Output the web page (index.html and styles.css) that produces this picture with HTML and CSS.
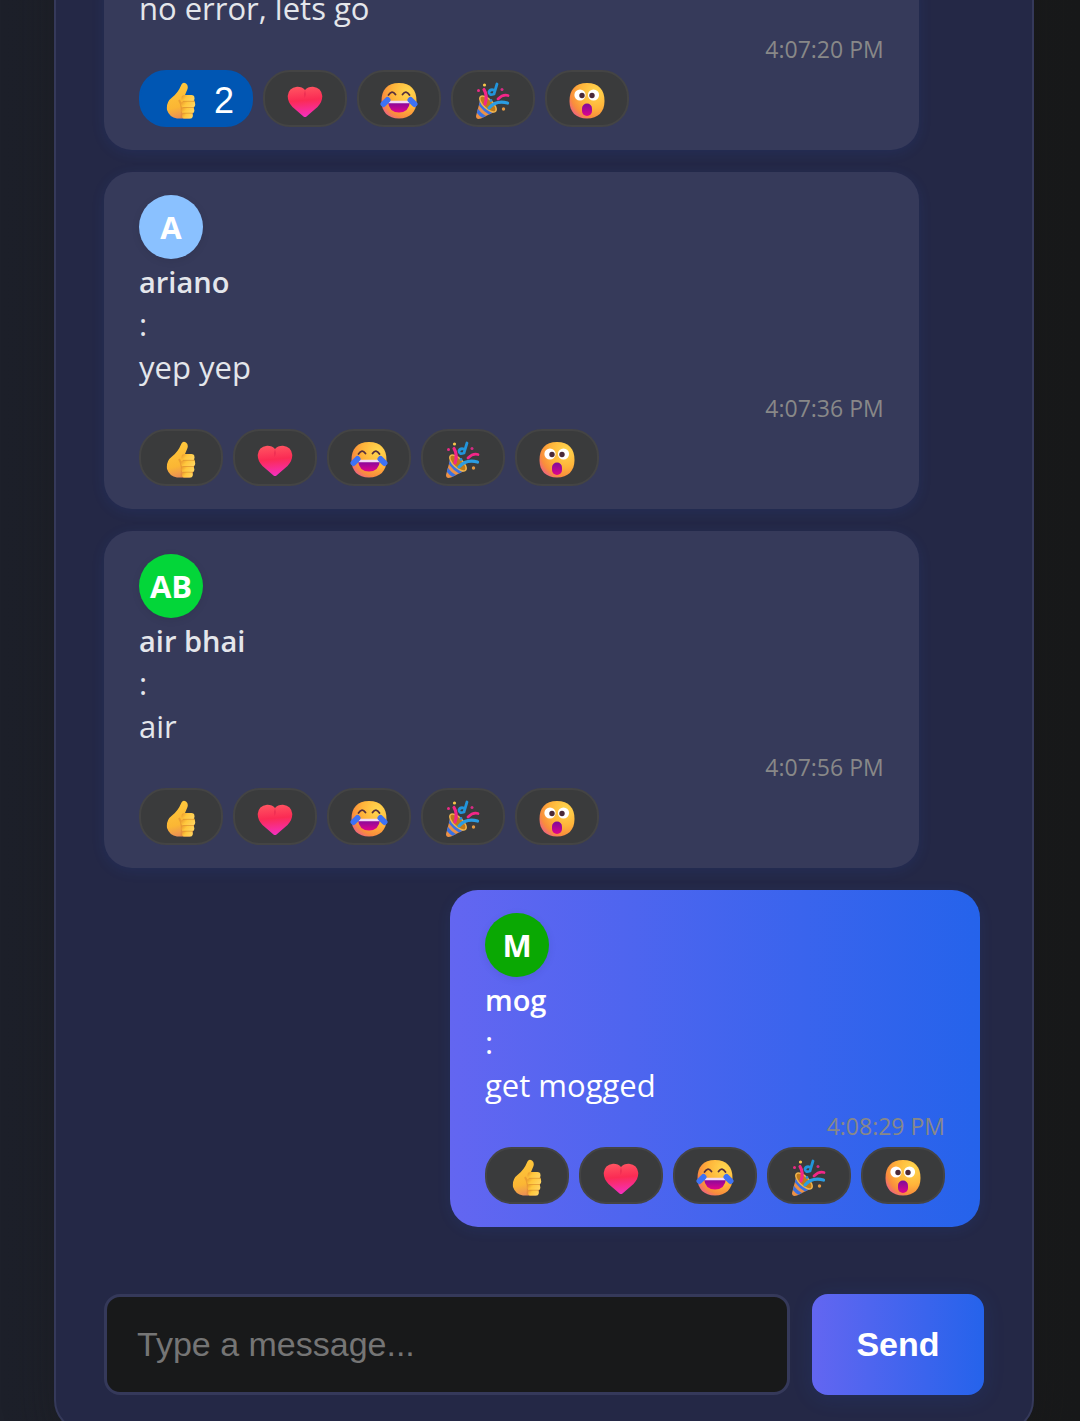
FILE: index.html
```html
<!DOCTYPE html>
<html lang="en">
<head>
<meta charset="utf-8">
<meta name="viewport" content="width=device-width, initial-scale=1">
<title>Chat</title>
<link rel="stylesheet" href="styles.css">
</head>
<body>
<svg class="sprite" aria-hidden="true">
  <defs>
    <radialGradient id="gold" cx="0.75" cy="0.25" r="0.9">
      <stop offset="0" stop-color="#ffd84f"/><stop offset="0.5" stop-color="#ffb43a"/><stop offset="0.8" stop-color="#f98d3c"/><stop offset="1" stop-color="#ee5f86"/>
    </radialGradient>
    <linearGradient id="thumb" x1="0.4" y1="0" x2="0.6" y2="1">
      <stop offset="0" stop-color="#ffc83c"/><stop offset="0.65" stop-color="#fbb634"/><stop offset="1" stop-color="#e88a58"/>
    </linearGradient>
    <linearGradient id="finger" x1="0" y1="0" x2="1" y2="0.4">
      <stop offset="0" stop-color="#e8942c"/><stop offset="0.45" stop-color="#ffc73c"/><stop offset="1" stop-color="#ffd35c"/>
    </linearGradient>
    <linearGradient id="heart" x1="0.4" y1="0" x2="0.5" y2="1">
      <stop offset="0" stop-color="#ff5461"/><stop offset="0.45" stop-color="#fb2b54"/><stop offset="1" stop-color="#f52fc0"/>
    </linearGradient>
    <linearGradient id="mouth" x1="0" y1="0" x2="0" y2="1">
      <stop offset="0" stop-color="#7d0a9c"/><stop offset="1" stop-color="#e0048c"/>
    </linearGradient>
    <clipPath id="cone"><path d="M7 15Q12 27 22 29L7 36.500Q2 38 2 34Z"/></clipPath>
  </defs>
  <symbol id="i-thumb" viewBox="0 0 38 38">
    <path d="M19.500 2.500Q21-.300 24 1.500Q26.500 3 25.500 7L22.800 13.500H28Q32.500 14 32 18Q34 21 31.500 24Q33 27.500 30.500 30Q31.500 35.500 27.500 36.500H15Q7.500 35.500 5 28Q4 20 10 15.500Q16 11 19.500 2.500Z" fill="url(#thumb)"/>
    <path d="M17 18Q21 24 19.500 36" fill="none" stroke="#dc8630" stroke-width="2" opacity=".55"/>
    <g fill="url(#finger)"><rect x="19.500" y="13" width="13" height="6.500" rx="3.200"/><rect x="19" y="19.300" width="14.200" height="6.300" rx="3.100"/><rect x="19.500" y="25.400" width="12.800" height="6" rx="3"/><rect x="20" y="31" width="10.800" height="5.600" rx="2.800"/></g>
    <path d="M21 19.300H32M20.500 25.500H32M21 31.200H31" stroke="#d78a2c" stroke-width=".8" opacity=".7"/>
  </symbol>
  <symbol id="i-heart" viewBox="0 0 38 38">
    <path d="M19 8Q22 4.500 27 4.700Q35.500 5.500 36.300 14Q36.300 20 31.500 25L20.500 34.500Q19 35.500 17.500 34.500L6.500 25Q1.700 20 1.700 14Q2.500 5.500 11 4.700Q16 4.500 19 8Z" fill="url(#heart)"/>
    <path d="M19 8Q17.500 12 18.800 16Q20.500 12 19 8Z" fill="#d81848" opacity=".5"/>
  </symbol>
  <symbol id="i-joy" viewBox="0 0 38 38">
    <path d="M19 1C31 1 36.500 8 36.500 19S30 36.500 19 36.500S1.500 30 1.500 19S7 1 19 1Z" fill="url(#gold)"/>
    <path d="M8.500 13Q12 7.500 15.500 12.500M22.500 12.500Q26 7.500 29.500 13" fill="none" stroke="#57303c" stroke-width="1.800" stroke-linecap="round"/>
    <path d="M8 19.500H30Q29 30.500 19 30.500T8 19.500Z" fill="url(#mouth)"/>
    <path d="M8 18.800H30L29.500 21.200H8.500Z" fill="#f3d9f4"/>
    <path d="M7.500 18L3.500 22M30.500 18L34.500 22" stroke="#3d72f5" stroke-width="6" stroke-linecap="round"/>
  </symbol>
  <symbol id="i-party" viewBox="0 0 38 38">
    <path d="M7 15Q12 27 22 29L7 36.500Q2 38 2 34Z" fill="#ec9147"/>
    <g clip-path="url(#cone)" stroke="#3a72e4" stroke-width="3.500" fill="none"><path d="M4 18Q9 29 22 34M1 25Q5 33 14 37"/></g>
    <ellipse cx="14" cy="22" rx="4.600" ry="10.500" transform="rotate(-46 14 22)" fill="#be7a19" stroke="#eeb24d" stroke-width="1.500"/>
    <path d="M10 7.500Q14 14 11 22" fill="none" stroke="#f32688" stroke-width="3.200" stroke-linecap="round"/>
    <path d="M23 2L20 12Q15 14 15 10Q16 7 20 8" fill="none" stroke="#2295db" stroke-width="2.800" stroke-linecap="round"/>
    <path d="M24 17Q29 12 34 13.500" fill="none" stroke="#f32688" stroke-width="2.800" stroke-linecap="round"/>
    <path d="M15 26Q22 18 33.500 21" fill="none" stroke="#2b9de2" stroke-width="3.200" stroke-linecap="round"/>
    <circle cx="10.500" cy="3" r="1.600" fill="#f7c54a"/><circle cx="4.500" cy="8.500" r="1.500" fill="#e92c84"/><circle cx="28" cy="7.500" r="1.500" fill="#d52c84"/><circle cx="29.500" cy="27" r="1.700" fill="#e29943"/><circle cx="17" cy="18.500" r="1.400" fill="#2b8fdc"/>
  </symbol>
  <symbol id="i-wow" viewBox="0 0 38 38">
    <path d="M19 1C31 1 36.500 8 36.500 19S30 36.500 19 36.500S1.500 30 1.500 19S7 1 19 1Z" fill="url(#gold)"/>
    <circle cx="12" cy="13" r="5.600" fill="#fff"/><circle cx="25.500" cy="13" r="5.600" fill="#fff"/>
    <circle cx="14" cy="13.500" r="2.700" fill="#4b2938"/><circle cx="24" cy="13.500" r="2.700" fill="#4b2938"/>
    <rect x="14" y="21.500" width="10" height="12.500" rx="5" fill="url(#mouth)"/>
  </symbol>
</svg>

<main class="page">
  <section class="chat">
    <div class="messages">
      <article class="message">
        <p class="text">no error, lets go</p>
        <time class="time">4:07:20 PM</time>
        <div class="reactions">
          <button class="reaction active" type="button" aria-label="Thumbs up, 2"><svg class="emoji"><use href="#i-thumb"/></svg><span>2</span></button>
          <button class="reaction" type="button" aria-label="Heart"><svg class="emoji"><use href="#i-heart"/></svg></button>
          <button class="reaction" type="button" aria-label="Joy"><svg class="emoji"><use href="#i-joy"/></svg></button>
          <button class="reaction" type="button" aria-label="Party"><svg class="emoji"><use href="#i-party"/></svg></button>
          <button class="reaction" type="button" aria-label="Wow"><svg class="emoji"><use href="#i-wow"/></svg></button>
        </div>
      </article>
      <article class="message">
        <div class="avatar blue">A</div>
        <strong class="name">ariano</strong>
        <span class="text">:</span>
        <p class="text">yep yep</p>
        <time class="time">4:07:36 PM</time>
        <div class="reactions">
          <button class="reaction" type="button" aria-label="Thumbs up"><svg class="emoji"><use href="#i-thumb"/></svg></button>
          <button class="reaction" type="button" aria-label="Heart"><svg class="emoji"><use href="#i-heart"/></svg></button>
          <button class="reaction" type="button" aria-label="Joy"><svg class="emoji"><use href="#i-joy"/></svg></button>
          <button class="reaction" type="button" aria-label="Party"><svg class="emoji"><use href="#i-party"/></svg></button>
          <button class="reaction" type="button" aria-label="Wow"><svg class="emoji"><use href="#i-wow"/></svg></button>
        </div>
      </article>
      <article class="message">
        <div class="avatar green">AB</div>
        <strong class="name">air bhai</strong>
        <span class="text">:</span>
        <p class="text">air</p>
        <time class="time">4:07:56 PM</time>
        <div class="reactions">
          <button class="reaction" type="button" aria-label="Thumbs up"><svg class="emoji"><use href="#i-thumb"/></svg></button>
          <button class="reaction" type="button" aria-label="Heart"><svg class="emoji"><use href="#i-heart"/></svg></button>
          <button class="reaction" type="button" aria-label="Joy"><svg class="emoji"><use href="#i-joy"/></svg></button>
          <button class="reaction" type="button" aria-label="Party"><svg class="emoji"><use href="#i-party"/></svg></button>
          <button class="reaction" type="button" aria-label="Wow"><svg class="emoji"><use href="#i-wow"/></svg></button>
        </div>
      </article>
      <article class="message own">
        <div class="avatar forest">M</div>
        <strong class="name">mog</strong>
        <span class="text">:</span>
        <p class="text">get mogged</p>
        <time class="time">4:08:29 PM</time>
        <div class="reactions">
          <button class="reaction" type="button" aria-label="Thumbs up"><svg class="emoji"><use href="#i-thumb"/></svg></button>
          <button class="reaction" type="button" aria-label="Heart"><svg class="emoji"><use href="#i-heart"/></svg></button>
          <button class="reaction" type="button" aria-label="Joy"><svg class="emoji"><use href="#i-joy"/></svg></button>
          <button class="reaction" type="button" aria-label="Party"><svg class="emoji"><use href="#i-party"/></svg></button>
          <button class="reaction" type="button" aria-label="Wow"><svg class="emoji"><use href="#i-wow"/></svg></button>
        </div>
      </article>
    </div>
    <form class="composer">
      <input class="field" type="text" placeholder="Type a message..." aria-label="Message">
      <button class="send" type="button">Send</button>
    </form>
  </section>
</main>
</body>
</html>
```
FILE: styles.css
```css
* { box-sizing: border-box; }

body {
  margin: 0;
  background: #18191a;
  color: #e4e6eb;
  font-family: "Open Sans", "Noto Sans", sans-serif;
}

.sprite { position: absolute; width: 0; height: 0; }

/* The newest messages stay in view at the bottom of the window. */
.page {
  display: flex;
  flex-direction: column;
  justify-content: flex-end;
  height: 100vh;
  overflow: hidden;
  padding: 0 46px 0 54px;
  background: linear-gradient(90deg, #1d202a, #18191a);
}

.chat {
  flex: none;
  margin-bottom: -11px;
  padding: 48px 48px 35px;
  border: 2px solid #35395a;
  border-radius: 32px;
  background: #242846;
  box-shadow: 0 16px 48px rgba(24, 25, 26, 0.4);
}

.messages {
  display: flex;
  flex-direction: column;
  align-items: flex-start;
  gap: 22px;
  padding-right: 4px;
}

.message {
  display: flex;
  flex-direction: column;
  width: 93%;
  padding: 23px 35px;
  border-radius: 28px;
  background: #363a5a;
  box-shadow: 0 3px 14px rgba(37, 99, 235, 0.1);
  font-size: 31px;
  line-height: 43px;
}

.own {
  align-self: flex-end;
  width: auto;
  background: linear-gradient(90deg, #6366f1, #2563eb);
  color: #fff;
}

.avatar {
  display: flex;
  align-items: center;
  justify-content: center;
  width: 64px;
  height: 64px;
  margin-bottom: 1px;
  border-radius: 50%;
  box-shadow: 0 2px 8px rgba(0, 0, 0, 0.08);
  color: #fff;
  font-weight: 700;
}

.blue { background: #8ac1ff; }
.green { background: #03d639; }
.forest { background: #0aa803; }

.name { font-size: 29px; font-weight: 600; }
.text { margin: 0; }

.time {
  align-self: flex-end;
  margin-bottom: 2px;
  color: #888;
  font-size: 23px;
  line-height: 38px;
}

.reactions { display: flex; gap: 10px; }

.reaction {
  display: flex;
  align-items: center;
  justify-content: center;
  gap: 14px;
  min-width: 84px;
  height: 57px;
  padding: 5px 21px 0;
  border: 2px solid #444;
  border-radius: 27px;
  background: #3a3b3c;
  color: #fff;
  font-family: "Liberation Sans", Arial, sans-serif;
  font-size: 36px;
}

.active {
  padding-right: 17px;
  border-color: #0056b3;
  background: #0056b3;
}

.emoji { flex: none; width: 38px; height: 38px; }

.composer {
  display: flex;
  gap: 22px;
  margin-top: 67px;
}

.field {
  flex: 1;
  min-width: 0;
  height: 101px;
  padding: 0 30px;
  border: 3px solid #35395a;
  border-radius: 16px;
  background: #18191a;
  color: #e4e6eb;
  font-family: "Liberation Sans", Arial, sans-serif;
  font-size: 34px;
}

.field::placeholder { color: #757575; }

.send {
  min-width: 172px;
  padding: 0 40px;
  border: 0;
  border-radius: 16px;
  background: linear-gradient(90deg, #6366f1, #2563eb);
  box-shadow: 0 3px 22px rgba(37, 99, 235, 0.12);
  color: #fff;
  font-family: "Liberation Sans", Arial, sans-serif;
  font-size: 34px;
  font-weight: 700;
}
```
